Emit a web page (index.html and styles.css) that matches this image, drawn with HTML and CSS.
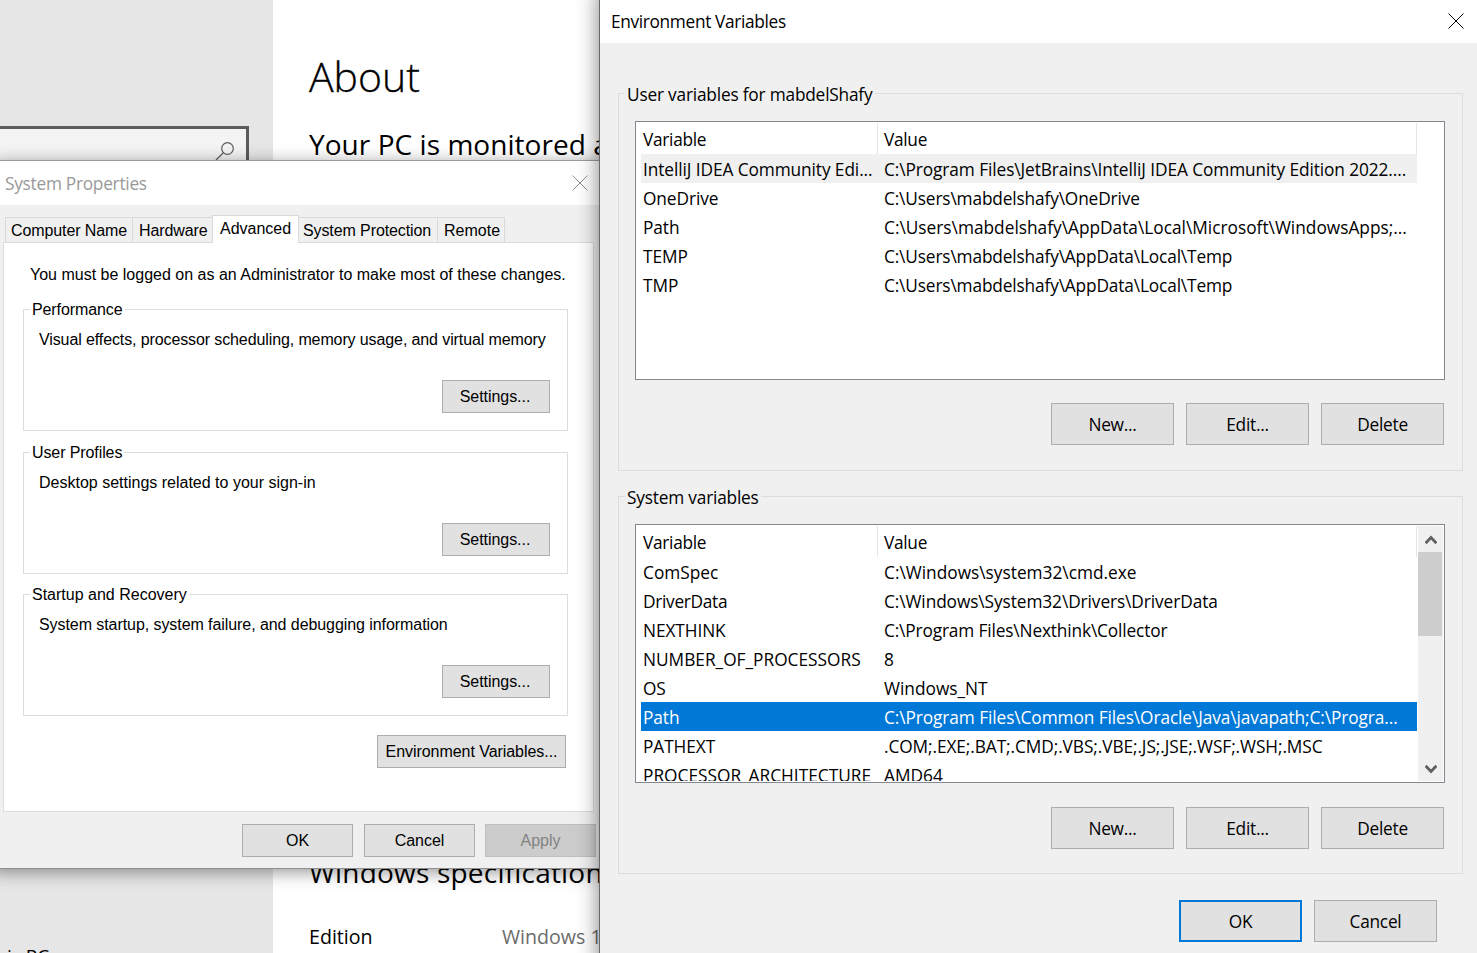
FILE: index.html
```html
<!DOCTYPE html>
<html lang="en">
<head>
<meta charset="utf-8">
<title>Environment Variables</title>
<link rel="stylesheet" href="styles.css">
</head>
<body>
<div class="desktop">
  <div class="settings">
    <aside class="sidebar">
      <div class="search"><svg width="20" height="20" viewBox="0 0 20 20" fill="none" stroke="#5c5c5c" stroke-width="1.2"><circle cx="12.5" cy="7.5" r="5.8"/><path d="M8.4 11.8L1 19"/></svg></div>
      <div class="nav-item">is PC</div>
    </aside>
    <main class="about">
      <h1>About</h1>
      <h2 class="monitored">Your PC is monitored and protected.</h2>
      <h2 class="spec">Windows specifications</h2>
      <div class="edition"><span>Edition</span><span class="muted">Windows 10 Enterprise</span></div>
    </main>
  </div>

  <section class="props">
    <header class="props-title"><span>System Properties</span>
      <svg width="16" height="16" viewBox="0 0 16 16" stroke="#8c8c8c" stroke-width="1"><path d="M.5.5l15 15M15.5.5l-15 15"/></svg></header>
    <nav class="tabs">
      <span class="tab t1">Computer Name</span><span class="tab t2">Hardware</span><span class="tab active">Advanced</span><span class="tab t4">System Protection</span><span class="tab t5">Remote</span>
    </nav>
    <div class="panel">
      <p class="note">You must be logged on as an Administrator to make most of these changes.</p>
      <div class="box"><span class="box-name tight">Performance</span><p class="perf">Visual effects, processor scheduling, memory usage, and virtual memory</p><button class="btn">Settings...</button></div>
      <div class="box"><span class="box-name tight">User Profiles</span><p>Desktop settings related to your sign-in</p><button class="btn">Settings...</button></div>
      <div class="box third"><span class="box-name">Startup and Recovery</span><p class="startup">System startup, system failure, and debugging information</p><button class="btn">Settings...</button></div>
      <button class="btn env-btn">Environment Variables...</button>
    </div>
    <footer class="props-foot"><button class="btn">OK</button><button class="btn">Cancel</button><button class="btn disabled">Apply</button></footer>
  </section>

  <section class="env">
    <header class="env-title"><span>Environment Variables</span>
      <svg width="16" height="16" viewBox="0 0 16 16" stroke="#000" stroke-width="1"><path d="M.5.5l15 15M15.5.5l-15 15"/></svg></header>
    <div class="group user">
      <span class="group-name">User variables for mabdelShafy</span>
      <div class="list">
        <div class="cols">
          <div class="head"><span>Variable</span><span>Value</span></div>
          <div class="row hover"><span>IntelliJ IDEA Community Edi...</span><span>C:\Program Files\JetBrains\IntelliJ IDEA Community Edition 2022....</span></div>
          <div class="row"><span>OneDrive</span><span class="narrow">C:\Users\mabdelshafy\OneDrive</span></div>
          <div class="row"><span>Path</span><span class="wide">C:\Users\mabdelshafy\AppData\Local\Microsoft\WindowsApps;...</span></div>
          <div class="row"><span>TEMP</span><span class="narrow">C:\Users\mabdelshafy\AppData\Local\Temp</span></div>
          <div class="row"><span>TMP</span><span class="narrow">C:\Users\mabdelshafy\AppData\Local\Temp</span></div>
        </div>
      </div>
      <div class="actions"><button>New...</button><button>Edit...</button><button>Delete</button></div>
    </div>
    <div class="group system">
      <span class="group-name">System variables</span>
      <div class="list">
        <div class="cols">
          <div class="head"><span>Variable</span><span>Value</span></div>
          <div class="row"><span class="wide">ComSpec</span><span class="wide">C:\Windows\system32\cmd.exe</span></div>
          <div class="row"><span class="loose">DriverData</span><span>C:\Windows\System32\Drivers\DriverData</span></div>
          <div class="row"><span>NEXTHINK</span><span class="narrow">C:\Program Files\Nexthink\Collector</span></div>
          <div class="row"><span class="wide">NUMBER_OF_PROCESSORS</span><span>8</span></div>
          <div class="row"><span>OS</span><span class="wide">Windows_NT</span></div>
          <div class="row selected"><span>Path</span><span>C:\Program Files\Common Files\Oracle\Java\javapath;C:\Progra...</span></div>
          <div class="row"><span>PATHEXT</span><span>.COM;.EXE;.BAT;.CMD;.VBS;.VBE;.JS;.JSE;.WSF;.WSH;.MSC</span></div>
          <div class="row"><span class="wide">PROCESSOR_ARCHITECTURE</span><span class="wide">AMD64</span></div>
        </div>
        <div class="scroll">
          <svg width="12" height="10" viewBox="0 0 12 10" fill="none" stroke="#606060" stroke-width="2.8"><path d="M.6 8.200L6 2.600l5.400 5.600"/></svg>
          <div class="thumb"></div>
          <svg class="down" width="12" height="10" viewBox="0 0 12 10" fill="none" stroke="#606060" stroke-width="2.8"><path d="M.6 1.800L6 7.400l5.400-5.600"/></svg>
        </div>
      </div>
      <div class="actions"><button>New...</button><button>Edit...</button><button>Delete</button></div>
    </div>
    <footer class="actions env-foot"><button class="default">OK</button><button>Cancel</button></footer>
  </section>
</div>
</body>
</html>
```
FILE: styles.css
```css
* { box-sizing: border-box; }
body { margin: 0; }
h1, h2, p { margin: 0; font-weight: 400; }
button { font: inherit; color: #000; padding: 0; letter-spacing: inherit; border-radius: 0; }
svg { display: block; flex: none; }

.desktop {
  position: relative;
  width: 1477px;
  height: 953px;
  overflow: hidden;
  background: #fff;
  color: #000;
  font-family: "Open Sans", sans-serif;
  white-space: nowrap;
}

/* Settings page behind the dialogs */
.settings { display: flex; height: 953px; }
.sidebar { width: 273px; flex: none; background: #e6e6e6; padding-top: 126px; overflow: hidden; }
.search {
  width: 249px;
  height: 48px;
  border: 3px solid #5c5c5c;
  border-left: 0;
  background: #f4f4f4;
  display: flex;
  justify-content: flex-end;
  padding: 12px 11px 0 0;
}
.nav-item { margin: 768px 0 0 7px; font-size: 19px; line-height: 28px; }
.about { flex: 1; padding-left: 36px; overflow: hidden; }
.about h1 { margin-top: 47px; font-size: 41px; line-height: 58px; font-weight: 300; -webkit-text-stroke: .3px #000; }
.about h2 { font-size: 28px; line-height: 40px; letter-spacing: .05px; }
.about .monitored { margin-top: 19px; }
.about .spec { margin-top: 688px; letter-spacing: .2px; }
.edition { display: flex; margin-top: 31px; font-size: 19.600px; line-height: 28px; }
.edition span:first-child { width: 193px; }
.muted { color: #6b6b6b; }

/* System Properties dialog */
.props {
  position: absolute;
  left: -8px;
  top: 160px;
  width: 620px;
  height: 709px;
  padding-left: 8px;
  background: #f0f0f0;
  border-top: 1px solid #9b9b9b;
  border-bottom: 1px solid #8f8f8f;
  box-shadow: 0 3px 16px rgba(0, 0, 0, .42);
  font: 16px/20px "Liberation Sans", Arial, sans-serif;
}
.props-title {
  height: 44px;
  background: #fff;
  color: #999;
  display: flex;
  justify-content: space-between;
  padding: 11px 24px 0 5px;
  font: 17.300px/24px "Open Sans", sans-serif;
  letter-spacing: -.27px;
}
.props-title svg { margin-top: 3px; }
.tabs { display: flex; align-items: flex-end; height: 38px; padding-left: 5px; margin-bottom: -1px; position: relative; }
.tab { height: 26px; margin-left: -1px; border: 1px solid #d9d9d9; padding: 3px 0 0 5px; letter-spacing: -.1px; }
.t1 { width: 128px; margin-left: 0; }
.t2 { width: 81px; padding-left: 6px; }
.tab.active { width: 87px; height: 28px; background: #fff; border-bottom: 0; padding: 3px 0 0 7px; letter-spacing: 0; }
.t4 { width: 140px; padding-left: 4px; }
.t5 { width: 68px; padding-left: 6px; letter-spacing: 0; }
.panel {
  width: 591px;
  height: 570px;
  margin-left: 3px;
  border: 1px solid #dcdcdc;
  background: #fff;
  padding: 22px 0 0 19px;
  display: flex;
  flex-direction: column;
}
.note { padding-left: 7px; height: 44px; }
.box { position: relative; width: 545px; height: 122px; border: 1px solid #dcdcdc; margin-bottom: 21px; padding: 20px 17px 0 15px; }
.box.third { margin-top: -1px; margin-bottom: 19px; }
.box-name { position: absolute; left: 6px; top: -10px; padding: 0 2px; background: #fff; }
.tight { letter-spacing: -.1px; }
.perf { letter-spacing: -.11px; }
.startup { letter-spacing: -.07px; }
.btn { height: 33px; background: #e1e1e1; border: 1px solid #adadad; letter-spacing: -.05px; }
.box .btn { display: block; width: 108px; margin: 30px 0 0 auto; padding-right: 2px; }
.env-btn { width: 189px; margin-left: 354px; flex: none; }
.props-foot { display: flex; padding: 12px 0 0 242px; gap: 11px; }
.props-foot .btn { width: 111px; }
.props-foot .disabled { margin-left: -1px; background: #ccc; border-color: #bfbfbf; color: #838383; }

/* Environment Variables dialog */
.env {
  position: absolute;
  left: 599px;
  top: -10px;
  width: 900px;
  height: 980px;
  padding-top: 10px;
  border-left: 1px solid #696969;
  background: #f0f0f0;
  box-shadow: 0 0 20px rgba(0, 0, 0, .5);
  font-size: 17.300px;
  line-height: 24px;
  letter-spacing: -.09px;
}
.env-title { height: 43px; width: 877px; display: flex; justify-content: space-between; padding: 10px 13px 0 11px; background: #fff; letter-spacing: -.34px; }
.env-title svg { margin-top: 3px; }
.group { position: relative; width: 845px; height: 378px; margin: 50px 0 0 18px; border: 1px solid #dcdcdc; padding: 27px 17px 0 16px; }
.group.system { margin-top: 25px; }
.group-name { position: absolute; left: 6px; top: -11px; padding: 0 2px; background: #f0f0f0; letter-spacing: -.2px; }
.list { width: 810px; height: 259px; border: 1px solid #828790; background: #fff; padding: 1px 1px 1px 5px; display: flex; overflow: hidden; }
.cols { width: 776px; height: 255px; flex: none; overflow: hidden; }
.head, .row { display: grid; grid-template-columns: 237px 1fr; }
.head { height: 31px; line-height: 34px; letter-spacing: -.3px; }
.head span { height: 31px; border-right: 1px solid #e5e5e5; padding-left: 2px; }
.row { height: 29px; line-height: 31px; }
.row span { padding-left: 2px; }
.head span + span, .row span + span { padding-left: 6px; }
.narrow { letter-spacing: -.15px; }
.wide { letter-spacing: 0; }
.loose { letter-spacing: -.3px; }
.hover { background: #f0f0f0; }
.selected { background: #0078d7; color: #fff; }
.scroll { width: 25px; margin-left: 1px; background: #f0f0f0; display: flex; flex-direction: column; padding-top: 9px; }
.scroll svg { margin-left: 7px; }
.thumb { width: 24px; height: 84px; margin-top: 7px; background: #cdcdcd; }
.scroll .down { margin-top: auto; margin-bottom: 7px; }
.actions { display: flex; justify-content: flex-end; gap: 12px; margin-top: 23px; padding-right: 1px; }
.actions button { width: 123px; height: 42px; background: #e1e1e1; border: 1px solid #adadad; padding-top: 1px; letter-spacing: -.25px; }
.system .actions { margin-top: 24px; }
.actions.env-foot { width: 837px; padding: 0; margin-top: 26px; }
.actions .default { border: 2px solid #0078d7; }
```
